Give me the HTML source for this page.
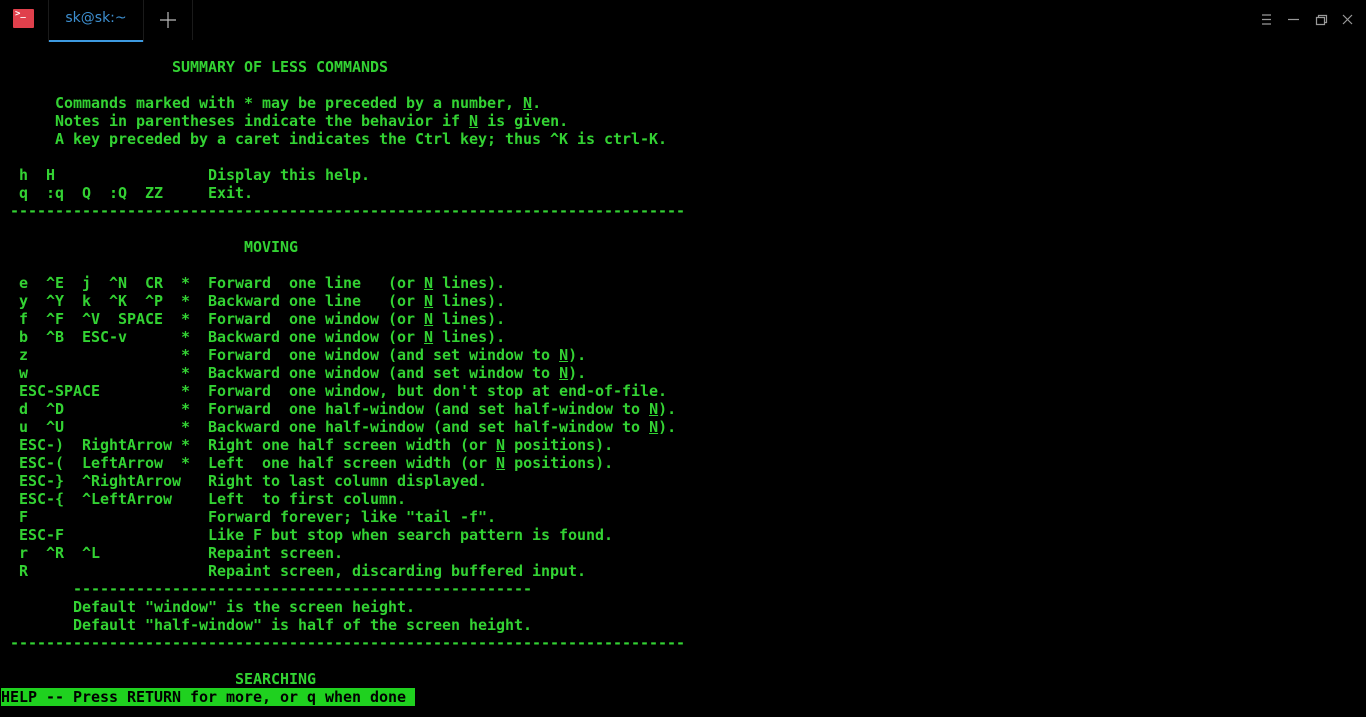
<!DOCTYPE html>
<html><head><meta charset="utf-8"><style>
html,body{margin:0;padding:0;background:#000;width:1366px;height:717px;overflow:hidden}
.tab{position:absolute;left:48px;top:0;width:96px;height:42px;border-left:1px solid #1a1a1a;border-right:1px solid #1a1a1a;box-sizing:border-box}
.tab span{position:absolute;left:0;right:0;top:10px;text-align:center;color:#3d8fd0;font:14px "DejaVu Sans",sans-serif}
.tab i{position:absolute;left:0;right:0;bottom:0;height:2px;background:#3d9ae0}
pre{position:absolute;left:1px;top:58px;margin:0;font:bold 15px/18px "DejaVu Sans Mono","Liberation Mono",monospace;letter-spacing:-0.03px;color:#33d233;white-space:pre}
u{text-decoration:underline}
.bar{background:#1fd11f;color:#000}
</style></head><body>
<div style="position:absolute;left:13px;top:9px;width:21px;height:19px;background:#e0404c;border-radius:1px"><span style="position:absolute;left:2px;top:0px;color:#fff;font:bold 9px 'DejaVu Sans Mono',monospace">&gt;_</span></div>
<div class="tab"><span>sk@sk:~</span><i></i></div>
<svg style="position:absolute;left:158px;top:10px" width="20" height="20"><path d="M10 2V18M2 10H18" stroke="#bbb" stroke-width="1.2"/></svg>
<div style="position:absolute;left:192px;top:0;width:1px;height:40px;background:#1a1a1a"></div>
<svg style="position:absolute;left:1240px;top:0" width="126" height="40" fill="none" stroke="#999" stroke-width="1.2">
<path d="M22 15H31M22 19.5H31M22 24H31"/><path d="M48 19.5H59"/><path d="M76.5 17.5H84.5V24.5H76.5Z M78.5 17.5V15.5H86.5V22.5H84.5"/><path d="M103 15L112 24M112 15L103 24"/></svg>
<pre>                   SUMMARY OF LESS COMMANDS

      Commands marked with * may be preceded by a number, <u>N</u>.
      Notes in parentheses indicate the behavior if <u>N</u> is given.
      A key preceded by a caret indicates the Ctrl key; thus ^K is ctrl-K.

  h  H                 Display this help.
  q  :q  Q  :Q  ZZ     Exit.
 ---------------------------------------------------------------------------

                           MOVING

  e  ^E  j  ^N  CR  *  Forward  one line   (or <u>N</u> lines).
  y  ^Y  k  ^K  ^P  *  Backward one line   (or <u>N</u> lines).
  f  ^F  ^V  SPACE  *  Forward  one window (or <u>N</u> lines).
  b  ^B  ESC-v      *  Backward one window (or <u>N</u> lines).
  z                 *  Forward  one window (and set window to <u>N</u>).
  w                 *  Backward one window (and set window to <u>N</u>).
  ESC-SPACE         *  Forward  one window, but don't stop at end-of-file.
  d  ^D             *  Forward  one half-window (and set half-window to <u>N</u>).
  u  ^U             *  Backward one half-window (and set half-window to <u>N</u>).
  ESC-)  RightArrow *  Right one half screen width (or <u>N</u> positions).
  ESC-(  LeftArrow  *  Left  one half screen width (or <u>N</u> positions).
  ESC-}  ^RightArrow   Right to last column displayed.
  ESC-{  ^LeftArrow    Left  to first column.
  F                    Forward forever; like "tail -f".
  ESC-F                Like F but stop when search pattern is found.
  r  ^R  ^L            Repaint screen.
  R                    Repaint screen, discarding buffered input.
        ---------------------------------------------------
        Default "window" is the screen height.
        Default "half-window" is half of the screen height.
 ---------------------------------------------------------------------------

                          SEARCHING
<span class="bar">HELP -- Press RETURN for more, or q when done </span></pre>
</body></html>
